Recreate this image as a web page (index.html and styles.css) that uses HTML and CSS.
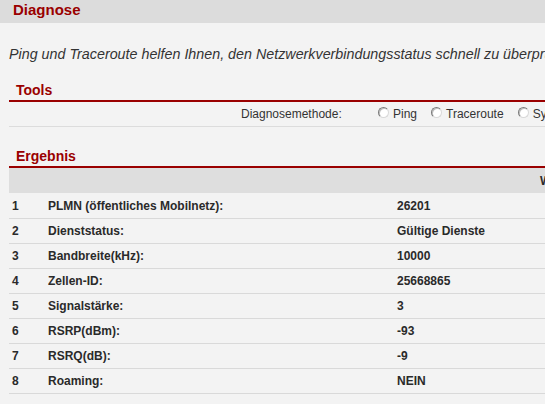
FILE: index.html
```html
<!DOCTYPE html>
<html lang="de">
<head>
    <meta charset="UTF-8">
    <title>Diagnose</title>
    <link rel="stylesheet" href="styles.css">
</head>
<body>
<div class="page">
    <div class="head">Diagnose</div>
    <div class="content">
        <p class="desc">Ping und Traceroute helfen Ihnen, den Netzwerkverbindungsstatus schnell zu überprüfen.</p>

        <h2 class="title">Tools</h2>
        <div class="method">
            <span class="method-label">Diagnosemethode:</span>
            <label class="opt"><input type="radio" name="m"> Ping</label>
            <label class="opt"><input type="radio" name="m"> Traceroute</label>
            <label class="opt"><input type="radio" name="m"> Systeminformationen</label>
        </div>

        <h2 class="title result-title">Ergebnis</h2>
        <table class="result">
            <tr class="thead">
                <td class="c-no"></td>
                <td class="c-name"></td>
                <td class="c-val"><span class="th-val">Wert</span></td>
            </tr>
            <tr><td class="c-no">1</td><td class="c-name">PLMN (öffentliches Mobilnetz):</td><td class="c-val">26201</td></tr>
            <tr><td class="c-no">2</td><td class="c-name">Dienststatus:</td><td class="c-val">Gültige Dienste</td></tr>
            <tr><td class="c-no">3</td><td class="c-name">Bandbreite(kHz):</td><td class="c-val">10000</td></tr>
            <tr><td class="c-no">4</td><td class="c-name">Zellen-ID:</td><td class="c-val">25668865</td></tr>
            <tr><td class="c-no">5</td><td class="c-name">Signalstärke:</td><td class="c-val">3</td></tr>
            <tr><td class="c-no">6</td><td class="c-name">RSRP(dBm):</td><td class="c-val">-93</td></tr>
            <tr><td class="c-no">7</td><td class="c-name">RSRQ(dB):</td><td class="c-val">-9</td></tr>
            <tr><td class="c-no">8</td><td class="c-name">Roaming:</td><td class="c-val">NEIN</td></tr>
        </table>
    </div>
</div>
</body>
</html>
```

FILE: styles.css
```css
*{
    padding: 0;
    margin: 0;
    box-sizing: border-box;
}
html, body{
    background: #f3f3f3;
    overflow: hidden;
}
body{
    font-family: "Liberation Sans", Arial, sans-serif;
    font-size: 12px;
    color: #2a2a2a;
}
.page{
    width: 1000px;
}
.head{
    height: 23px;
    background: #dcdcdc;
    color: #9a0000;
    font-size: 15px;
    font-weight: bold;
    line-height: 19px;
    padding-left: 13px;
}
.content{
    padding-left: 9px;
}
.desc{
    font-style: italic;
    font-size: 14.3px;
    line-height: 16px;
    color: #333;
    margin-top: 23px;
}
.title{
    margin-top: 18px;
    padding-left: 7px;
    font-size: 14px;
    line-height: 20px;
    color: #9a0000;
    border-bottom: 2px solid #9a0000;
    height: 22px;
}
.method{
    height: 25px;
    display: flex;
    align-items: center;
    border-bottom: 1px solid #dcdcdc;
    padding-left: 232px;
    color: #333;
}
.method-label{
    width: 137px;
}
.opt{
    display: flex;
    align-items: center;
    margin-right: 14px;
    white-space: nowrap;
}
.opt input{
    -webkit-appearance: none;
    appearance: none;
    width: 11px;
    height: 11px;
    border-radius: 50%;
    border: 1px solid;
    border-color: #7a7a7a #d8d8d8 #d8d8d8 #7a7a7a;
    background: #fff;
    box-shadow: inset 1px 1px 0 #bdbdbd;
    margin: 0 4px 4px 0;
}
.result-title{
    margin-top: 19px;
}
.result{
    width: 991px;
    border-collapse: collapse;
}
.result td{
    height: 25px;
    font-weight: bold;
    border-bottom: 1px solid #d9d9d9;
    color: #2a2a2a;
    padding-top: 1px;
}
.result .thead td{
    background: #dedede;
    border-bottom: none;
}
.c-no{
    width: 39px;
    padding-left: 3px;
}
.c-name{
    width: 349px;
}
.th-val{
    padding-left: 143px;
}
```
